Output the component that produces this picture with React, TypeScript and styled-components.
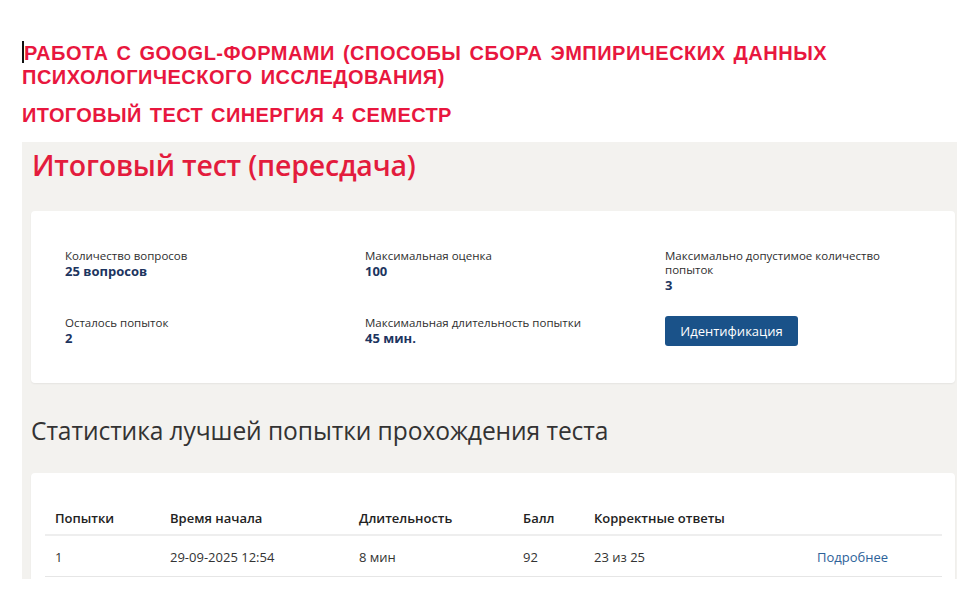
import React from 'react';
import styled, { createGlobalStyle } from 'styled-components';

const GlobalStyle = createGlobalStyle`
  html, body {
    margin: 0;
    padding: 0;
    background: #ffffff;
  }
  body {
    font-family: "Open Sans", "Noto Sans", sans-serif;
    color: #333333;
  }
`;

const Page = styled.div`
  width: 980px;
  height: 599px;
  overflow: hidden;
  padding: 41px 0 0 22px;
  box-sizing: border-box;
`;

const PostTitle = styled.h1`
  position: relative;
  margin: 0;
  text-indent: 2px;
  font-family: "Liberation Sans", Arial, sans-serif;
  font-weight: 700;
  font-size: 20px;
  line-height: 24px;
  letter-spacing: 0.5px;
  word-spacing: 2px;
  color: #e8173e;
  text-transform: uppercase;

  /* text caret */
  &::before {
    content: '';
    position: absolute;
    left: 0;
    top: 0;
    width: 2px;
    height: 22px;
    background: #111;
  }
`;

const SubTitle = styled.h2`
  margin: 14px 0 0;
  font-family: "Liberation Sans", Arial, sans-serif;
  font-weight: 700;
  font-size: 20px;
  line-height: 24px;
  letter-spacing: 0.4px;
  word-spacing: 2px;
  color: #e8173e;
`;

const Panel = styled.section`
  margin-top: 15px;
  width: 935px;
  height: 437px;
  overflow: hidden;
  background: #f3f2ef;
  padding: 0 2px 0 9px;
  box-sizing: border-box;
`;

const TestTitle = styled.h1`
  margin: 0;
  padding: 3px 0 0 1px;
  font-family: "Open Sans", sans-serif;
  font-weight: 600;
  font-size: 28.5px;
  line-height: 40px;
  color: #e31c3d;
  letter-spacing: -0.2px;
`;

const Card = styled.div`
  background: #ffffff;
  border-radius: 4px;
  box-shadow: 0 1px 2px rgba(0, 0, 0, 0.06);
`;

const InfoCard = styled(Card)`
  margin-top: 26px;
  padding: 38px 34px 37px;
  display: grid;
  grid-template-columns: 300px 300px 250px;
  row-gap: 23px;
`;

const Field = styled.div`
  display: flex;
  flex-direction: column;
`;

const Label = styled.div`
  font-size: 11.5px;
  line-height: 14px;
  color: #2e2e2e;
`;

const Value = styled.div`
  font-size: 13px;
  font-weight: 700;
  line-height: 16px;
  color: #1d355f;
`;

const Button = styled.button`
  align-self: flex-start;
  width: 133px;
  height: 30px;
  border: none;
  border-radius: 3px;
  background: #1a5289;
  color: #ffffff;
  font-family: "Open Sans", sans-serif;
  font-size: 13px;
  cursor: pointer;
`;

const SectionTitle = styled.h2`
  margin: 32px 0 0;
  font-family: "Open Sans", sans-serif;
  font-weight: 400;
  font-size: 24.6px;
  line-height: 32px;
  color: #333333;
  letter-spacing: -0.1px;
`;

const TableCard = styled(Card)`
  margin-top: 26px;
  padding: 30px 14px 0;
  min-height: 200px;
`;

const Table = styled.table`
  width: 897px;
  table-layout: fixed;
  border-collapse: collapse;
  font-size: 13px;
`;

const Th = styled.th<{ $w: number }>`
  text-align: left;
  font-weight: 600;
  color: #222;
  padding: 6px 0 7px 10px;
  line-height: 18px;
  width: ${(p) => p.$w}px;
  box-sizing: border-box;
  border-bottom: 2px solid #eeeeee;
`;

const Td = styled.td`
  padding: 12px 0 10px 10px;
  line-height: 18px;
  color: #333;
  border-bottom: 1px solid #e6e6e6;
`;

const MoreLink = styled.a`
  color: #2d6299;
  text-decoration: none;
`;

const columns = [
  { title: 'Попытки', w: 115 },
  { title: 'Время начала', w: 189 },
  { title: 'Длительность', w: 164 },
  { title: 'Балл', w: 71 },
  { title: 'Корректные ответы', w: 223 },
  { title: '', w: 135 },
];

export default function App() {
  return (
    <>
      <GlobalStyle />
      <Page>
        <PostTitle>
          Работа с GOOGL-формами (способы сбора эмпирических данных
          <br />
          психологического исследования)
        </PostTitle>
        <SubTitle>ИТОГОВЫЙ ТЕСТ СИНЕРГИЯ 4 СЕМЕСТР</SubTitle>

        <Panel>
          <TestTitle>Итоговый тест (пересдача)</TestTitle>

          <InfoCard>
            <Field>
              <Label>Количество вопросов</Label>
              <Value>25 вопросов</Value>
            </Field>
            <Field>
              <Label>Максимальная оценка</Label>
              <Value>100</Value>
            </Field>
            <Field>
              <Label>
                Максимально допустимое количество
                <br />
                попыток
              </Label>
              <Value>3</Value>
            </Field>
            <Field>
              <Label>Осталось попыток</Label>
              <Value>2</Value>
            </Field>
            <Field>
              <Label>Максимальная длительность попытки</Label>
              <Value>45 мин.</Value>
            </Field>
            <Field>
              <Button>Идентификация</Button>
            </Field>
          </InfoCard>

          <SectionTitle>Статистика лучшей попытки прохождения теста</SectionTitle>

          <TableCard>
            <Table>
              <thead>
                <tr>
                  {columns.map((c, i) => (
                    <Th key={i} $w={c.w}>
                      {c.title}
                    </Th>
                  ))}
                </tr>
              </thead>
              <tbody>
                <tr>
                  <Td>1</Td>
                  <Td>29-09-2025 12:54</Td>
                  <Td>8 мин</Td>
                  <Td>92</Td>
                  <Td>23 из 25</Td>
                  <Td>
                    <MoreLink href="#">Подробнее</MoreLink>
                  </Td>
                </tr>
              </tbody>
            </Table>
          </TableCard>
        </Panel>
      </Page>
    </>
  );
}
